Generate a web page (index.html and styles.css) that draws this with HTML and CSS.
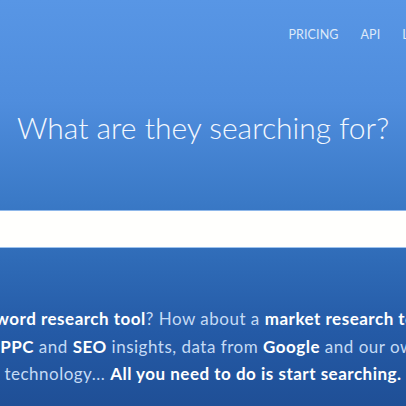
FILE: index.html
```html
<!DOCTYPE html>
<html>
<head>
<meta charset="utf-8">
<link rel="stylesheet" href="styles.css">
</head>
<body>
<div class="page">
  <header class="nav">
    <a class="nav-link">PRICING</a>
    <a class="nav-link">API</a>
    <a class="nav-link">LOGIN</a>
  </header>
  <section class="hero">
    <h1 class="title">What are they searching for?</h1>
  </section>
  <div class="search-bar"><input class="search-input" type="text"></div>
  <section class="intro">
    <p class="line"><b>keyword research tool</b>? How about a <b>market research tool?</b></p>
    <p class="line line-shift"><b>PPC</b> and <b>SEO</b> insights, data from <b>Google</b> and our own</p>
    <p class="line">technology... <b>All you need to do is start searching.</b></p>
  </section>
</div>
</body>
</html>
```
FILE: styles.css
```css
html, body {
  margin: 0;
  padding: 0;
  width: 406px;
  height: 406px;
  overflow: hidden;
}
body {
  font-family: Lato, "Open Sans", sans-serif;
  background: linear-gradient(180deg, #5896e5 0%, #4f8ddd 25%, #3a79c6 50%, #2f6bb7 64%, #245aa6 82%, #1f4f96 100%);
}
.page {
  display: flex;
  flex-direction: column;
  height: 406px;
}
.nav {
  display: flex;
  justify-content: flex-end;
  gap: 22px;
  padding: 27px 0 0 0;
  margin-right: -35px;
  height: 20px;
}
.nav-link {
  color: #dde9f9;
  font-size: 12.5px;
  letter-spacing: 0.1px;
}
.hero {
  display: flex;
  justify-content: center;
  padding-top: 62px;
  height: 121px;
  box-sizing: border-box;
}
.title {
  margin: 0;
  font-weight: 300;
  font-size: 30px;
  color: #f4f8fe;
  white-space: nowrap;
  line-height: 36px;
}
.search-bar {
  margin-top: 42px;
  height: 36px;
  border-top: 1px solid #8fb8ea;
  border-bottom: 1px solid #9dc3ee;
  background: #fffffd;
}
.search-input {
  border: 0;
  outline: none;
  width: 100%;
  height: 100%;
  background: transparent;
  padding: 0;
}
.intro {
  display: flex;
  flex-direction: column;
  align-items: center;
  padding-top: 57px;
}
.line {
  margin: 0;
  white-space: nowrap;
  font-size: 17px;
  letter-spacing: 0.5px;
  line-height: 27.5px;
  color: #c5dbf5;
}
.line-shift {
  margin-left: 18px;
}
.line b {
  color: #ffffff;
  font-weight: 700;
}
```
